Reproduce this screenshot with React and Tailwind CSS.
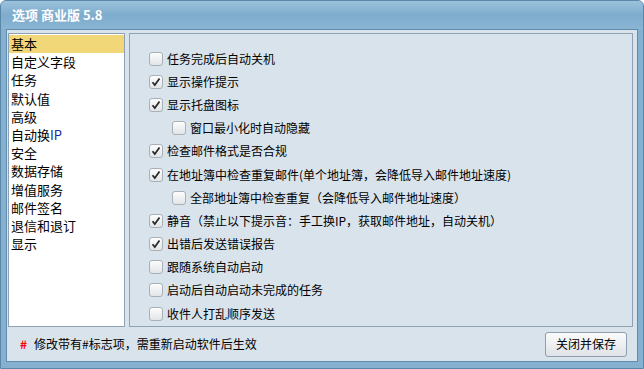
import React from 'react'

const font = { fontFamily: '"Noto Sans CJK SC", "Liberation Sans", sans-serif' }

const menu = ['基本', '自定义字段', '任务', '默认值', '高级', '自动换IP', '安全', '数据存储', '增值服务', '邮件签名', '退信和退订', '显示']

const options = [
  { label: '任务完成后自动关机', checked: false },
  { label: '显示操作提示', checked: true },
  { label: '显示托盘图标', checked: true },
  { label: '窗口最小化时自动隐藏', checked: false, indent: true },
  { label: '检查邮件格式是否合规', checked: true },
  { label: '在地址簿中检查重复邮件(单个地址簿，会降低导入邮件地址速度)', checked: true },
  { label: '全部地址簿中检查重复（会降低导入邮件地址速度）', checked: false, indent: true },
  { label: '静音（禁止以下提示音：手工换IP，获取邮件地址，自动关机）', checked: true },
  { label: '出错后发送错误报告', checked: true },
  { label: '跟随系统自动启动', checked: false },
  { label: '启动后自动启动未完成的任务', checked: false },
  { label: '收件人打乱顺序发送', checked: false },
]

function Checkbox({ checked }) {
  return (
    <span className="w-[14px] h-[14px] shrink-0 rounded-[3px] border border-[#a8b0b8] bg-gradient-to-b from-[#fdfdfd] to-[#e2e4e6] flex items-center justify-center">
      {checked && (
        <svg width="10" height="10" viewBox="0 0 10 10">
          <path d="M1.5 5.2 L3.8 8 L8.5 1.5" fill="none" stroke="#2b2b2b" strokeWidth="1.8" />
        </svg>
      )}
    </span>
  )
}

export default function App() {
  return (
    <div style={font} className="w-[644px] h-[369px] bg-[#85b0cf] border border-[#5a86a8] rounded-t-[6px] flex flex-col overflow-hidden">
      <div className="h-[28px] shrink-0 flex items-center pl-[11px] bg-gradient-to-b from-[#9cc2dc] via-[#7eaccd] to-[#8ab5d3] text-white font-bold text-[13px]">
        选项 商业版 5.8
      </div>
      <div className="flex-1 mx-[5px] mb-[6px] border border-[#5f8cae] bg-[#d9e3ec] flex flex-col">
        <div className="flex gap-[4px] pl-[1px] pt-[3px] pr-[4px]">
          <div className="w-[117px] h-[294px] bg-white border border-[#8fa2b4] pt-[1px] text-[13px] text-black">
            {menu.map((m, i) => (
              <div key={m} className={`h-[18.2px] leading-[18px] pl-[2px] ${i === 0 ? 'bg-[#f1d778]' : ''}`}>
                {m === '自动换IP' ? (<>自动换<span className="text-[#1a2a9a]">IP</span></>) : m}
              </div>
            ))}
          </div>
          <div className="flex-1 h-[294px] border border-[#8fa2b4] pt-[13px] pl-[19px]">
            {options.map((o) => (
              <div key={o.label} className={`h-[23.2px] flex items-center gap-[4px] text-[12px] text-black ${o.indent ? 'pl-[23px]' : ''}`}>
                <Checkbox checked={o.checked} />
                <span className="whitespace-nowrap">{o.label}</span>
              </div>
            ))}
          </div>
        </div>
        <div className="flex-1 flex items-center pl-[13px] pr-[10px]">
          <span className="text-[#ff0000] font-bold text-[12px] w-[14px]">#</span>
          <span className="text-[12px] text-black">修改带有#标志项，需重新启动软件后生效</span>
          <button className="ml-auto w-[82px] h-[25px] rounded-[3px] border border-[#8e9eae] bg-gradient-to-b from-[#fbfbfb] to-[#dfe3e7] text-[12px] text-black">
            关闭并保存
          </button>
        </div>
      </div>
    </div>
  )
}
